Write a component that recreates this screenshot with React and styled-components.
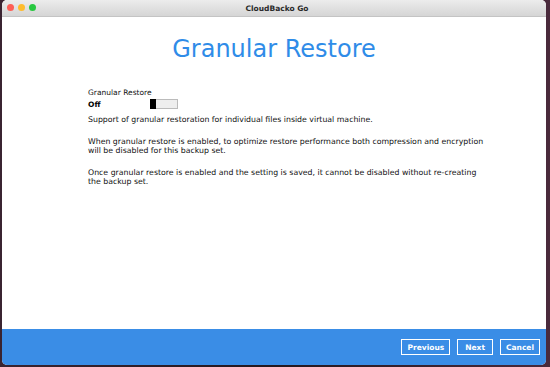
import React, { useState } from 'react';
import styled, { createGlobalStyle } from 'styled-components';

const Global = createGlobalStyle`
  html, body { margin: 0; padding: 0; }
  body {
    width: 550px;
    height: 367px;
    overflow: hidden;
    background: linear-gradient(90deg, #3a2431 0%, #23181f 50%, #4a2a3c 100%);
    font-family: "DejaVu Sans", Verdana, sans-serif;
  }
`;

const Window = styled.div`
  margin: 0 4px 2px 2px;
  height: 365px;
  display: flex;
  flex-direction: column;
  background: #fff;
  border-radius: 5px;
  overflow: hidden;
`;

const TitleBar = styled.div`
  height: 16px;
  flex: none;
  position: relative;
  display: flex;
  align-items: center;
  justify-content: center;
  background: linear-gradient(#ececec, #d5d5d5);
  border-bottom: 1px solid #c4c4c4;
`;

const Lights = styled.div`
  position: absolute;
  left: 5px;
  top: 4px;
  display: flex;
  gap: 4px;
`;

const Light = styled.span`
  width: 7px;
  height: 7px;
  border-radius: 50%;
  background: ${p => p.color};
`;

const Title = styled.div`
  font-size: 7.5px;
  font-weight: bold;
  color: #2a2a2a;
  padding-left: 6px;
`;

const Content = styled.div`
  flex: 1;
  padding: 17px 0 0 86px;
`;

const Heading = styled.h1`
  margin: 0 0 0 -86px;
  text-align: center;
  font-weight: normal;
  font-size: 24px;
  line-height: 30px;
  color: #2f8ce8;
`;

const Label = styled.div`
  margin-top: 24px;
  font-size: 7.5px;
  color: #111;
`;

const Row = styled.div`
  display: flex;
  align-items: center;
  margin-top: 2px;
`;

const Off = styled.div`
  width: 62px;
  font-size: 7.5px;
  font-weight: bold;
  color: #000;
`;

const Toggle = styled.div`
  width: 28px;
  height: 10px;
  box-sizing: border-box;
  border: 1px solid #bbb;
  background: #eee;
  display: flex;
  padding: 1px;
`;

const Knob = styled.span`
  width: 6px;
  background: #000;
  margin: -2px 0 -2px -2px;
`;

const Para = styled.p`
  margin: ${p => p.gap}px 0 0;
  width: 400px;
  font-size: 7.8px;
  line-height: 9.5px;
  color: #111;
`;

const Footer = styled.div`
  height: 36px;
  flex: none;
  background: #3a8de6;
  display: flex;
  justify-content: flex-end;
  align-items: center;
  gap: 7px;
  padding: 0 6px 0 0;
`;

const Button = styled.div`
  height: 16px;
  padding: 0 ${p => p.pad}px;
  box-sizing: border-box;
  border: 1.5px solid #fff;
  color: #fff;
  font-size: 7.5px;
  font-weight: bold;
  display: flex;
  align-items: center;
`;

export default function App() {
  const [on] = useState(false);
  return (
    <>
      <Global />
      <Window>
        <TitleBar>
          <Lights>
            <Light color="#fe5f57" />
            <Light color="#febc2e" />
            <Light color="#28c840" />
          </Lights>
          <Title>CloudBacko Go</Title>
        </TitleBar>
        <Content>
          <Heading>Granular Restore</Heading>
          <Label>Granular Restore</Label>
          <Row>
            <Off>{on ? 'On' : 'Off'}</Off>
            <Toggle><Knob /></Toggle>
          </Row>
          <Para gap={6}>Support of granular restoration for individual files inside virtual machine.</Para>
          <Para gap={12}>When granular restore is enabled, to optimize restore performance both compression and encryption will be disabled for this backup set.</Para>
          <Para gap={12}>Once granular restore is enabled and the setting is saved, it cannot be disabled without re&#8209;creating the backup set.</Para>
        </Content>
        <Footer>
          <Button pad={5}>Previous</Button>
          <Button pad={7}>Next</Button>
          <Button pad={5}>Cancel</Button>
        </Footer>
      </Window>
    </>
  );
}
